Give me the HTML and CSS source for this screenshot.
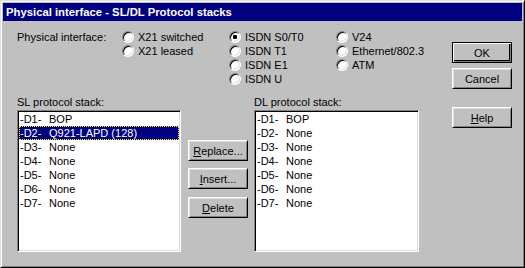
FILE: index.html
```html
<!DOCTYPE html>
<html>
<head>
<meta charset="utf-8">
<title>Physical interface - SL/DL Protocol stacks</title>
<link rel="stylesheet" href="styles.css">
</head>
<body>
<div class="window">
  <div class="titlebar">Physical interface - SL/DL Protocol stacks</div>
  <div class="body">
    <div class="main">
      <div class="iface">
        <div class="iface-label">Physical interface:</div>
        <div class="radio-col">
          <div class="radio"><span class="circle"></span>X21 switched</div>
          <div class="radio"><span class="circle"></span>X21 leased</div>
        </div>
        <div class="radio-col">
          <div class="radio"><span class="circle checked"></span>ISDN S0/T0</div>
          <div class="radio"><span class="circle"></span>ISDN T1</div>
          <div class="radio"><span class="circle"></span>ISDN E1</div>
          <div class="radio"><span class="circle"></span>ISDN U</div>
        </div>
        <div class="radio-col last">
          <div class="radio"><span class="circle"></span>V24</div>
          <div class="radio"><span class="circle"></span>Ethernet/802.3</div>
          <div class="radio"><span class="circle"></span>ATM</div>
        </div>
      </div>
      <div class="stacks">
        <div class="stack sl">
          <div class="stack-label">SL protocol stack:</div>
          <div class="listbox">
            <div class="item"><span class="code">-D1-</span>BOP</div>
            <div class="item selected"><span class="code">-D2-</span>Q921-LAPD (128)</div>
            <div class="item"><span class="code">-D3-</span>None</div>
            <div class="item"><span class="code">-D4-</span>None</div>
            <div class="item"><span class="code">-D5-</span>None</div>
            <div class="item"><span class="code">-D6-</span>None</div>
            <div class="item"><span class="code">-D7-</span>None</div>
          </div>
        </div>
        <div class="mid-buttons">
          <div class="btn"><u>R</u>eplace...</div>
          <div class="btn btn-insert"><u>I</u>nsert...</div>
          <div class="btn btn-delete"><u>D</u>elete</div>
        </div>
        <div class="stack dl">
          <div class="stack-label">DL protocol stack:</div>
          <div class="listbox">
            <div class="item"><span class="code">-D1-</span>BOP</div>
            <div class="item"><span class="code">-D2-</span>None</div>
            <div class="item"><span class="code">-D3-</span>None</div>
            <div class="item"><span class="code">-D4-</span>None</div>
            <div class="item"><span class="code">-D5-</span>None</div>
            <div class="item"><span class="code">-D6-</span>None</div>
            <div class="item"><span class="code">-D7-</span>None</div>
          </div>
        </div>
      </div>
    </div>
    <div class="side">
      <div class="btn btn-default">OK</div>
      <div class="btn btn-cancel">Cancel</div>
      <div class="btn btn-help"><u>H</u>elp</div>
    </div>
  </div>
</div>
</body>
</html>
```

FILE: styles.css
```css
* { box-sizing: border-box; }
html, body { margin: 0; padding: 0; }
body {
  width: 525px;
  height: 268px;
  background: #c0c0c0;
  font-family: "Liberation Sans", Arial, sans-serif;
  font-size: 11px;
  color: #000;
  overflow: hidden;
}
.window {
  width: 525px;
  height: 268px;
  background: #c0c0c0;
  border: 1px solid;
  border-color: #dfdfdf #000 #000 #dfdfdf;
  box-shadow: inset 1px 1px #fff, inset -1px -1px #808080;
  padding: 2px;
}
.titlebar {
  height: 18px;
  background: #000080;
  color: #fff;
  font-weight: bold;
  font-size: 11.3px;
  line-height: 18px;
  padding-left: 3px;
  white-space: nowrap;
}
.body {
  display: flex;
  padding: 9px 0 0 14px;
}
.main { width: 402px; flex: none; }
.iface {
  display: flex;
  height: 56px;
}
.iface-label {
  flex: none;
  width: 105px;
  line-height: 14px;
}
.radio-col { flex: none; width: 107px; }
.radio-col.last { width: 80px; }
.radio {
  display: flex;
  align-items: center;
  height: 14px;
  line-height: 14px;
  white-space: nowrap;
}
.circle {
  position: relative;
  width: 12px;
  height: 12px;
  margin-right: 4px;
  border-radius: 50%;
  background: #fff;
  border: 1px solid;
  border-color: #808080 #fff #fff #808080;
  box-shadow: inset 1px 1px #000, inset -1px -1px #dfdfdf;
  flex: none;
}
.circle.checked::after {
  content: "";
  position: absolute;
  left: 3px;
  top: 3px;
  width: 4px;
  height: 4px;
  border-radius: 1px;
  background: #000;
}
.stacks {
  display: flex;
  margin-top: 9px;
}
.stack-label {
  line-height: 14px;
  height: 14px;
  margin-bottom: 1px;
  white-space: nowrap;
}
.sl { width: 164px; flex: none; }
.dl { width: 165px; flex: none; margin-left: 6px; }
.listbox {
  height: 142px;
  background: #fff;
  border: 1px solid;
  border-color: #808080 #fff #fff #808080;
  box-shadow: inset 1px 1px #000, inset -1px -1px #dfdfdf;
  padding: 1px;
}
.item {
  height: 14px;
  line-height: 14px;
  padding-left: 1px;
  white-space: nowrap;
}
.item .code {
  display: inline-block;
  width: 29px;
}
.item.selected {
  background: #000080;
  color: #fff;
  outline: 1px dotted #ffff00;
  outline-offset: -1px;
}
.mid-buttons {
  flex: none;
  width: 60px;
  margin-left: 7px;
  padding-top: 45px;
}
.btn {
  width: 60px;
  height: 21px;
  display: flex;
  align-items: center;
  justify-content: center;
  background: #c0c0c0;
  border: 1px solid;
  border-color: #fff #000 #000 #fff;
  box-shadow: inset 1px 1px #dfdfdf, inset -1px -1px #808080;
  white-space: nowrap;
}
.btn u { text-decoration: underline; text-underline-offset: 1px; }
.btn-insert { margin-top: 7px; }
.btn-delete { margin-top: 8px; }
.side {
  flex: none;
  margin-left: 33px;
  padding-top: 12px;
}
.btn-default {
  border-color: #000;
  box-shadow: inset 1px 1px #fff, inset -1px -1px #808080, inset -2px -2px #000;
}
.btn-cancel { margin-top: 5px; }
.btn-help { margin-top: 18px; }
```
